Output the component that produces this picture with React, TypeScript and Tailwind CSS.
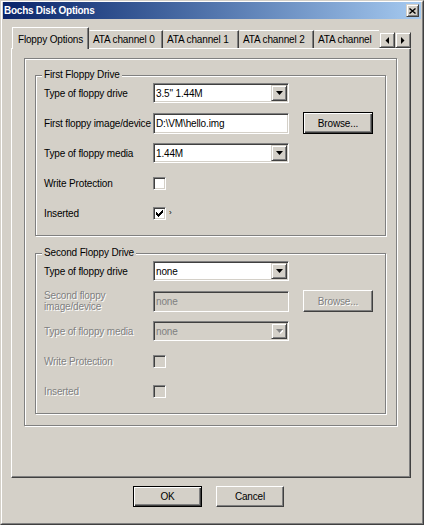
import type { ReactNode } from "react";

const sunken =
  "border border-t-[#808080] border-l-[#808080] border-r-white border-b-white shadow-[inset_1px_1px_0_#404040,inset_-1px_-1px_0_#d4d0c8]";
const raised =
  "border border-t-white border-l-white border-r-[#404040] border-b-[#404040] shadow-[inset_-1px_-1px_0_#808080]";
const arrowBtn =
  "border border-t-[#d4d0c8] border-l-[#d4d0c8] border-r-[#404040] border-b-[#404040] shadow-[inset_1px_1px_0_#fff,inset_-1px_-1px_0_#808080]";
const defaultBtn =
  "border border-black shadow-[inset_1px_1px_0_#fff,inset_-1px_-1px_0_#404040,inset_-2px_-2px_0_#808080]";
const etched = "border border-[#808080] shadow-[inset_1px_1px_0_#fff,1px_1px_0_#fff]";
const grayText = "text-[#808080] [text-shadow:1px_1px_0_#fff]";

const checkRows: [number, number, number][] = [
  [6, 0, 1],
  [5, 1, 2],
  [0, 2, 1],
  [4, 2, 3],
  [0, 3, 2],
  [3, 3, 3],
  [0, 4, 5],
  [1, 5, 3],
  [2, 6, 1],
];

const Select = ({ value, disabled }: { value: string; disabled?: boolean }) => (
  <div className={`flex h-[20px] w-[136px] items-center ${sunken} ${disabled ? "bg-[#d4d0c8]" : "bg-white"}`}>
    <span className={`flex-1 pl-[2px] ${disabled ? "text-[#808080]" : "text-black"}`}>{value}</span>
    <div className={`mr-[1px] flex h-[16px] w-[16px] items-center justify-center bg-[#d4d0c8] ${arrowBtn}`}>
      <svg width="7" height="5" viewBox="0 0 7 5">
        {disabled && <path d="M1 1h7L4.5 5z" fill="#fff" />}
        <path d="M0 0h7L3.5 4z" fill={disabled ? "#808080" : "#000"} />
      </svg>
    </div>
  </div>
);

const Check = ({ checked, disabled }: { checked?: boolean; disabled?: boolean }) => (
  <div className={`flex h-[13px] w-[13px] items-center justify-center ${sunken} ${disabled ? "bg-[#d4d0c8]" : "bg-white"}`}>
    {checked && (
      <svg width="7" height="7" viewBox="0 0 7 7">
        {checkRows.map(([x, y, w], i) => (
          <rect key={i} x={x} y={y} width={w} height={1} fill="#000" />
        ))}
      </svg>
    )}
  </div>
);

const Row = ({ label, disabled, children }: { label: ReactNode; disabled?: boolean; children: ReactNode }) => (
  <div className="flex h-[30px] items-center">
    <div className={`w-[109px] whitespace-nowrap leading-[11px] ${disabled ? grayText : ""}`}>{label}</div>
    {children}
  </div>
);

const Group = ({ title, children, className }: { title: string; children: ReactNode; className?: string }) => (
  <fieldset className={`ml-[10px] w-[351px] p-0 ${etched} ${className ?? ""}`}>
    <legend className="ml-[6px] bg-[#d4d0c8] px-[2px] leading-[12px]">{title}</legend>
    <div className="-mt-[3px] pb-[7px] pl-[8px]">{children}</div>
  </fieldset>
);

const tabs = [
  { label: "ATA channel 0", w: "w-[74px]" },
  { label: "ATA channel 1", w: "w-[76px]" },
  { label: "ATA channel 2", w: "w-[75px]" },
  { label: "ATA channel", w: "w-[74px]" },
];

const App = () => {
  return (
    <div className="h-[525px] w-[424px] border border-t-[#d4d0c8] border-l-[#d4d0c8] border-r-[#404040] border-b-[#404040] bg-[#d4d0c8] font-['Liberation_Sans',Arial,sans-serif] text-[10px] tracking-[-0.15px] text-black">
      <div className="h-full border border-t-white border-l-white border-r-[#808080] border-b-[#808080] px-[1px]">
        {/* title bar */}
        <div className="flex h-[17px] items-center justify-between bg-linear-to-r from-[#0a246a] to-[#a6caf0] pl-[1px] pr-[2px]">
          <span className="text-[10px] font-bold tracking-[-0.25px] text-white">Bochs Disk Options</span>
          <div className={`flex h-[13px] w-[13px] items-center justify-center bg-[#d4d0c8] ${arrowBtn}`}>
            <svg width="7" height="6" viewBox="0 0 7 6">
              <path d="M0.5 0.5l6 5M6.5 0.5l-6 5" stroke="#000" strokeWidth="1.4" />
            </svg>
          </div>
        </div>

        {/* tabs */}
        <div className="relative z-10 ml-[9px] mt-[8px] flex h-[21px] items-end">
          <div className="-mb-px flex h-[22px] w-[367px] items-end overflow-hidden">
            <div className="flex h-[22px] w-[77px] shrink-0 items-start justify-center border border-b-0 border-t-white border-l-white border-r-[#404040] bg-[#d4d0c8] pt-[4px] shadow-[inset_-1px_0_0_#808080]">
              Floppy Options
            </div>
            {tabs.map((t) => (
              <div
                key={t.label}
                className={`mb-px flex h-[18px] ${t.w} shrink-0 items-center whitespace-nowrap border border-b-0 border-t-white border-l-[#d4d0c8] border-r-[#404040] pl-[3px] shadow-[inset_-1px_0_0_#808080]`}
              >
                {t.label}
              </div>
            ))}
          </div>
          <div className={`flex h-[16px] w-[16px] items-center justify-center bg-[#d4d0c8] ${arrowBtn}`}>
            <svg width="4" height="7" viewBox="0 0 4 7">
              <path d="M4 0v7L0.5 3.5z" fill="#000" />
            </svg>
          </div>
          <div className={`flex h-[16px] w-[16px] items-center justify-center bg-[#d4d0c8] ${arrowBtn}`}>
            <svg width="4" height="7" viewBox="0 0 4 7">
              <path d="M0 0v7L3.5 3.5z" fill="#000" />
            </svg>
          </div>
        </div>

        {/* tab page */}
        <div className={`ml-[8px] h-[430px] w-[400px] pt-[9px] ${raised}`}>
          <div className={`ml-[12px] h-[368px] w-[373px] ${etched}`}>
            <Group title="First Floppy Drive" className="mt-[10px]">
              <Row label="Type of floppy drive">
                <Select value={'3.5" 1.44M'} />
              </Row>
              <Row label="First floppy image/device">
                <div className={`flex h-[21px] w-[136px] items-center bg-white pl-[2px] ${sunken}`}>D:\VM\hello.img</div>
                <button className={`ml-[14px] h-[22px] w-[70px] bg-[#d4d0c8] ${defaultBtn}`}>Browse...</button>
              </Row>
              <Row label="Type of floppy media">
                <Select value="1.44M" />
              </Row>
              <Row label="Write Protection">
                <Check />
              </Row>
              <Row label="Inserted">
                <Check checked />
                <span className="ml-[3px] text-[8px]">›</span>
              </Row>
            </Group>

            <Group title="Second Floppy Drive" className="mt-[11px]">
              <Row label="Type of floppy drive">
                <Select value="none" />
              </Row>
              <Row
                disabled
                label={
                  <>
                    Second floppy
                    <br />
                    image/device
                  </>
                }
              >
                <div className={`flex h-[21px] w-[136px] items-center bg-[#d4d0c8] pl-[2px] text-[#808080] ${sunken}`}>none</div>
                <button className={`ml-[14px] h-[22px] w-[70px] bg-[#d4d0c8] ${raised} ${grayText}`}>Browse...</button>
              </Row>
              <Row disabled label="Type of floppy media">
                <Select value="none" disabled />
              </Row>
              <Row disabled label="Write Protection">
                <Check disabled />
              </Row>
              <Row disabled label="Inserted">
                <Check disabled />
              </Row>
            </Group>
          </div>
        </div>

        {/* dialog buttons */}
        <div className="mt-[8px] flex justify-center gap-[14px] pr-[7px]">
          <button className={`h-[21px] w-[69px] bg-[#d4d0c8] ${defaultBtn}`}>OK</button>
          <button className={`h-[21px] w-[68px] bg-[#d4d0c8] ${raised}`}>Cancel</button>
        </div>
      </div>
    </div>
  );
};

export default App;
